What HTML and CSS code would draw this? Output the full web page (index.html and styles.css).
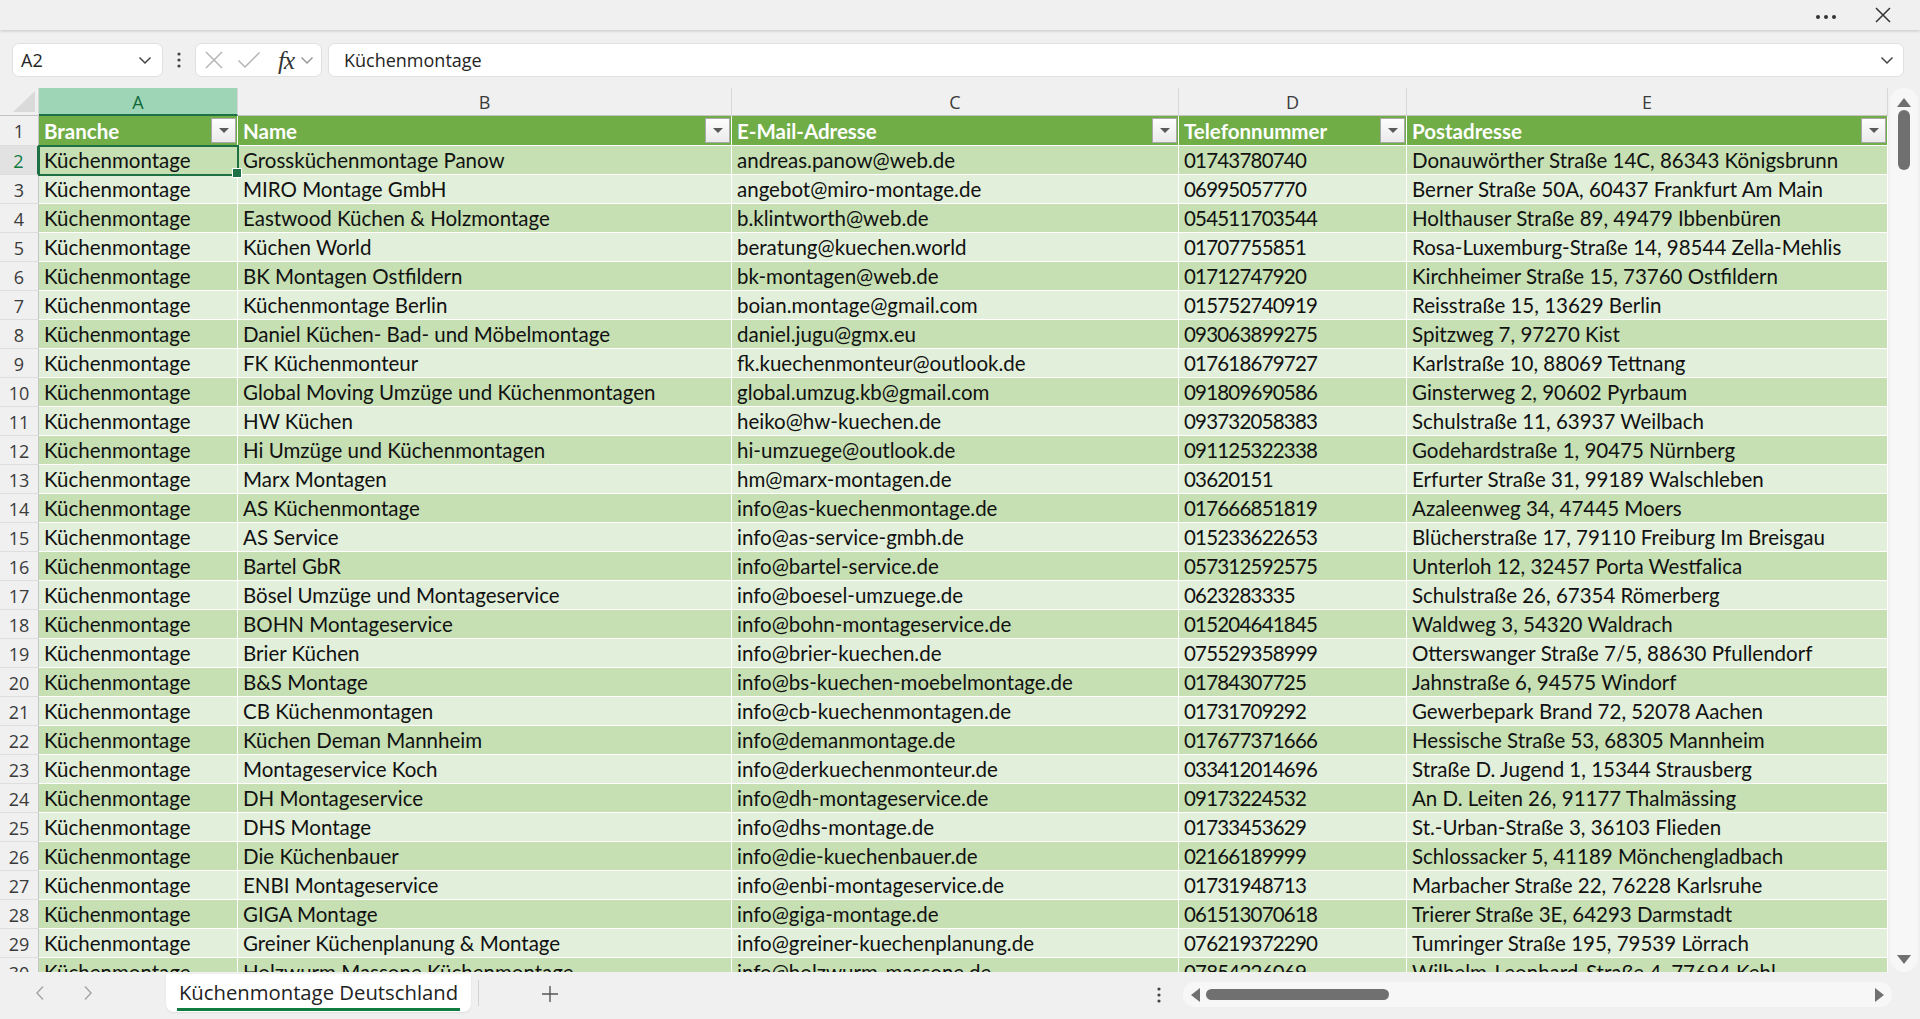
FILE: index.html
```html
<!DOCTYPE html>
<html lang="de">
<head>
  <meta charset="UTF-8" />
  <title>Küchenmontage Deutschland</title>
  <link rel="stylesheet" href="styles.css">
</head>
<body>
  <div class="app">
    <div class="topbar">
      <svg class="icon-more" width="22" height="6" viewBox="0 0 22 6"><circle cx="3" cy="3" r="2"/><circle cx="11" cy="3" r="2"/><circle cx="19" cy="3" r="2"/></svg>
      <svg class="icon-close" width="18" height="18" viewBox="0 0 18 18"><path d="M2 2 L16 16 M16 2 L2 16"/></svg>
    </div>

    <div class="formula-row">
      <div class="namebox">
        <span>A2</span>
        <svg width="14" height="9" viewBox="0 0 14 9"><path d="M1.5 1.5 L7 7 L12.5 1.5"/></svg>
      </div>
      <div class="vdots">
        <svg width="4" height="16" viewBox="0 0 4 16"><circle cx="2" cy="2" r="1.6"/><circle cx="2" cy="8" r="1.6"/><circle cx="2" cy="14" r="1.6"/></svg>
      </div>
      <div class="fxbox">
        <svg class="fx-cancel" width="20" height="20" viewBox="0 0 20 20"><path d="M2 2 L18 18 M18 2 L2 18"/></svg>
        <svg class="fx-ok" width="24" height="18" viewBox="0 0 24 18"><path d="M1.5 9.5 L8 16 L22.5 1.5"/></svg>
        <span class="fx">fx</span>
        <svg class="fx-drop" width="14" height="9" viewBox="0 0 14 9"><path d="M1.5 1.5 L7 7 L12.5 1.5"/></svg>
      </div>
      <div class="formula">
        <span>Küchenmontage</span>
        <svg width="14" height="9" viewBox="0 0 14 9"><path d="M1.5 1.5 L7 7 L12.5 1.5"/></svg>
      </div>
    </div>

    <div class="workarea">
      <div class="sheet" id="sheet">
        <div class="corner"><svg width="22" height="21" viewBox="0 0 22 21"><path d="M22 0 L22 21 L0 21 Z"/></svg></div>
        <div class="colhead active">A</div>
        <div class="colhead">B</div>
        <div class="colhead">C</div>
        <div class="colhead">D</div>
        <div class="colhead">E</div>

        <div class="rowhead">1</div>
        <div class="th">Branche<span class="filter"></span></div>
        <div class="th">Name<span class="filter"></span></div>
        <div class="th">E-Mail-Adresse<span class="filter"></span></div>
        <div class="th">Telefonnummer<span class="filter"></span></div>
        <div class="th">Postadresse<span class="filter"></span></div>
      </div>

      <div class="vscroll">
        <div class="track">
          <span class="arrow up"></span>
          <span class="thumb"></span>
          <span class="arrow down"></span>
        </div>
      </div>
    </div>

    <div class="bottombar">
      <svg class="nav" width="10" height="16" viewBox="0 0 10 16"><path d="M8 1.5 L2 8 L8 14.5"/></svg>
      <svg class="nav" width="10" height="16" viewBox="0 0 10 16"><path d="M2 1.5 L8 8 L2 14.5"/></svg>
      <div class="tab"><span>Küchenmontage Deutschland</span></div>
      <span class="tab-sep"></span>
      <svg class="plus" width="18" height="18" viewBox="0 0 18 18"><path d="M9 1 L9 17 M1 9 L17 9"/></svg>
      <div class="bottom-dots">
        <svg width="4" height="16" viewBox="0 0 4 16"><circle cx="2" cy="2" r="1.6"/><circle cx="2" cy="8" r="1.6"/><circle cx="2" cy="14" r="1.6"/></svg>
      </div>
      <div class="hscroll">
        <span class="arrow left"></span>
        <span class="thumb"></span>
        <span class="arrow right"></span>
      </div>
    </div>
  </div>

  <script>
    const rows = [
      ['Grossküchenmontage Panow', 'andreas.panow@web.de', '01743780740', 'Donauwörther Straße 14C, 86343 Königsbrunn'],
      ['MIRO Montage GmbH', 'angebot@miro-montage.de', '06995057770', 'Berner Straße 50A, 60437 Frankfurt Am Main'],
      ['Eastwood Küchen & Holzmontage', 'b.klintworth@web.de', '054511703544', 'Holthauser Straße 89, 49479 Ibbenbüren'],
      ['Küchen World', 'beratung@kuechen.world', '01707755851', 'Rosa-Luxemburg-Straße 14, 98544 Zella-Mehlis'],
      ['BK Montagen Ostfildern', 'bk-montagen@web.de', '01712747920', 'Kirchheimer Straße 15, 73760 Ostfildern'],
      ['Küchenmontage Berlin', 'boian.montage@gmail.com', '015752740919', 'Reisstraße 15, 13629 Berlin'],
      ['Daniel Küchen- Bad- und Möbelmontage', 'daniel.jugu@gmx.eu', '093063899275', 'Spitzweg 7, 97270 Kist'],
      ['FK Küchenmonteur', 'fk.kuechenmonteur@outlook.de', '017618679727', 'Karlstraße 10, 88069 Tettnang'],
      ['Global Moving Umzüge und Küchenmontagen', 'global.umzug.kb@gmail.com', '091809690586', 'Ginsterweg 2, 90602 Pyrbaum'],
      ['HW Küchen', 'heiko@hw-kuechen.de', '093732058383', 'Schulstraße 11, 63937 Weilbach'],
      ['Hi Umzüge und Küchenmontagen', 'hi-umzuege@outlook.de', '091125322338', 'Godehardstraße 1, 90475 Nürnberg'],
      ['Marx Montagen', 'hm@marx-montagen.de', '03620151', 'Erfurter Straße 31, 99189 Walschleben'],
      ['AS Küchenmontage', 'info@as-kuechenmontage.de', '017666851819', 'Azaleenweg 34, 47445 Moers'],
      ['AS Service', 'info@as-service-gmbh.de', '015233622653', 'Blücherstraße 17, 79110 Freiburg Im Breisgau'],
      ['Bartel GbR', 'info@bartel-service.de', '057312592575', 'Unterloh 12, 32457 Porta Westfalica'],
      ['Bösel Umzüge und Montageservice', 'info@boesel-umzuege.de', '0623283335', 'Schulstraße 26, 67354 Römerberg'],
      ['BOHN Montageservice', 'info@bohn-montageservice.de', '015204641845', 'Waldweg 3, 54320 Waldrach'],
      ['Brier Küchen', 'info@brier-kuechen.de', '075529358999', 'Otterswanger Straße 7/5, 88630 Pfullendorf'],
      ['B&S Montage', 'info@bs-kuechen-moebelmontage.de', '01784307725', 'Jahnstraße 6, 94575 Windorf'],
      ['CB Küchenmontagen', 'info@cb-kuechenmontagen.de', '01731709292', 'Gewerbepark Brand 72, 52078 Aachen'],
      ['Küchen Deman Mannheim', 'info@demanmontage.de', '017677371666', 'Hessische Straße 53, 68305 Mannheim'],
      ['Montageservice Koch', 'info@derkuechenmonteur.de', '033412014696', 'Straße D. Jugend 1, 15344 Strausberg'],
      ['DH Montageservice', 'info@dh-montageservice.de', '09173224532', 'An D. Leiten 26, 91177 Thalmässing'],
      ['DHS Montage', 'info@dhs-montage.de', '01733453629', 'St.-Urban-Straße 3, 36103 Flieden'],
      ['Die Küchenbauer', 'info@die-kuechenbauer.de', '02166189999', 'Schlossacker 5, 41189 Mönchengladbach'],
      ['ENBI Montageservice', 'info@enbi-montageservice.de', '01731948713', 'Marbacher Straße 22, 76228 Karlsruhe'],
      ['GIGA Montage', 'info@giga-montage.de', '061513070618', 'Trierer Straße 3E, 64293 Darmstadt'],
      ['Greiner Küchenplanung & Montage', 'info@greiner-kuechenplanung.de', '076219372290', 'Tumringer Straße 195, 79539 Lörrach'],
      ['Holzwurm Massone Küchenmontage', 'info@holzwurm-massone.de', '07854226069', 'Wilhelm-Leonhard-Straße 4, 77694 Kehl']
    ];

    const sheet = document.getElementById("sheet");

    function addCell(className, text) {
      const div = document.createElement("div");
      div.className = className;
      div.textContent = text;
      sheet.appendChild(div);
      return div;
    }

    rows.forEach((row, i) => {
      const n = i + 2;
      const stripe = n % 2 === 0 ? "td dark" : "td light";
      addCell(n === 2 ? "rowhead active" : "rowhead", n);
      const first = addCell(stripe, "Küchenmontage");
      if (n === 2) first.classList.add("selected");
      row.forEach((value, k) => addCell(k === 2 ? stripe + " num" : stripe, value));
    });
  </script>
</body>
</html>
```

FILE: styles.css
```css
* {
  box-sizing: border-box;
}

body {
  margin: 0;
  background: #f0f0f0;
  font-family: "Open Sans", "Noto Sans", sans-serif;
  color: #242424;
  overflow: hidden;
}

.app {
  height: 1019px;
  display: flex;
  flex-direction: column;
}

/* top strip */
.topbar {
  height: 30px;
  flex: none;
  display: flex;
  align-items: center;
  justify-content: flex-end;
  gap: 37px;
  padding-right: 28px;
  background: #f0f0f0;
  box-shadow: 0 1px 3px rgba(0,0,0,0.18);
  position: relative;
  z-index: 2;
}

.icon-more {
  fill: #333;
  margin-top: 4px;
}

.icon-close {
  stroke: #333;
  stroke-width: 1.5;
  fill: none;
}

/* formula bar */
.formula-row {
  height: 58px;
  flex: none;
  display: flex;
  align-items: flex-start;
  padding: 13px 16px 0 12px;
}

.namebox,
.fxbox,
.formula {
  height: 34px;
  background: #fff;
  border: 1px solid #e0e0e0;
  border-radius: 7px;
  display: flex;
  align-items: center;
}

.namebox {
  width: 151px;
  justify-content: space-between;
  padding: 0 10px 0 8px;
  font-size: 18px;
}

.namebox svg,
.formula svg,
.fx-drop {
  stroke: #444;
  stroke-width: 1.5;
  fill: none;
}

.vdots {
  width: 32px;
  height: 34px;
  display: flex;
  align-items: center;
  justify-content: center;
  fill: #444;
}

.fxbox {
  width: 127px;
  padding-left: 8px;
}

.fx-cancel,
.fx-ok {
  stroke: #b5b5b5;
  stroke-width: 1.5;
  fill: none;
}

.fx-ok {
  margin-left: 13px;
}

.fx {
  font-family: "Liberation Serif", serif;
  font-style: italic;
  font-size: 25px;
  color: #333;
  margin-left: 17px;
  line-height: 1;
  letter-spacing: -1px;
}

.fx-drop {
  stroke: #999;
  margin-left: 6px;
}

.formula {
  flex: 1;
  margin-left: 6px;
  justify-content: space-between;
  padding: 0 9px 0 15px;
  font-size: 18px;
}

/* sheet */
.workarea {
  height: 884px;
  flex: none;
  display: flex;
}

.sheet {
  width: 1888px;
  flex: none;
  display: grid;
  grid-template-columns: 39px 199px 494px 447px 228px 481px;
  grid-template-rows: 28px 30px;
  grid-auto-rows: 29px;
  overflow: hidden;
  align-content: start;
}

.corner {
  background: #f0f0f0;
  border-bottom: 1px solid #c4c4c4;
  border-right: 1px solid #d8d8d8;
  display: flex;
  align-items: flex-end;
  justify-content: flex-end;
  padding: 0 3px 3px 0;
  fill: #dadada;
}

.colhead {
  background: #f0f0f0;
  border-right: 1px solid #d8d8d8;
  border-bottom: 1px solid #c4c4c4;
  text-align: center;
  font-size: 18px;
  line-height: 28px;
  color: #3b3b3b;
}

.colhead.active {
  background: #9fd5b7;
  color: #0f6a38;
  border-bottom: 2px solid #1e7145;
}

.rowhead {
  background: #f0f0f0;
  border-right: 1px solid #c4c4c4;
  border-bottom: 1px solid #dedede;
  text-align: center;
  font-size: 18px;
  line-height: 30px;
  color: #3b3b3b;
}

.rowhead.active {
  background: #e2e2e2;
  color: #107c41;
  border-right: 2px solid #1e7145;
}

.th,
.td {
  font-family: Lato, "Open Sans", sans-serif;
  font-size: 20.5px;
  white-space: nowrap;
  overflow: hidden;
  padding-left: 5px;
  border-right: 1px solid #fff;
  border-bottom: 1px solid #fff;
}

.th {
  background: #70ad47;
  color: #fff;
  font-weight: bold;
  line-height: 30px;
  display: flex;
  align-items: center;
  justify-content: space-between;
  padding-right: 1px;
}

.filter {
  width: 25px;
  height: 25px;
  flex: none;
  background: linear-gradient(#fdfdfd, #eaeaea);
  border: 1px solid #a9a9a9;
  display: flex;
  align-items: center;
  justify-content: center;
}

.filter::after {
  content: "";
  border-left: 5px solid transparent;
  border-right: 5px solid transparent;
  border-top: 5px solid #5a5a5a;
}

.td {
  line-height: 28px;
  color: #111;
}

.td.num {
  letter-spacing: -0.8px;
}

.td.dark {
  background: #c6e0b4;
}

.td.light {
  background: #e2efda;
}

.td.selected {
  position: relative;
  overflow: visible;
  outline: 2px solid #1e7145;
  outline-offset: -1px;
  z-index: 1;
}

.td.selected::after {
  content: "";
  position: absolute;
  right: -5px;
  bottom: -4px;
  width: 8px;
  height: 8px;
  background: #1e7145;
  border: 1px solid #fff;
}

/* vertical scrollbar */
.vscroll {
  flex: 1;
  padding-left: 2px;
}

.vscroll .track {
  width: 28px;
  height: 100%;
  background: #f7f7f7;
  border-radius: 14px;
  display: flex;
  flex-direction: column;
  align-items: center;
  padding: 10px 0 8px;
}

.thumb {
  background: #707070;
  border-radius: 6px;
}

.vscroll .thumb {
  width: 12px;
  height: 60px;
  margin-top: 3px;
}

.vscroll .arrow.down {
  margin-top: auto;
}

.arrow.up {
  border-left: 7px solid transparent;
  border-right: 7px solid transparent;
  border-bottom: 9px solid #707070;
}

.arrow.down {
  border-left: 7px solid transparent;
  border-right: 7px solid transparent;
  border-top: 9px solid #707070;
}

.arrow.left {
  border-top: 7px solid transparent;
  border-bottom: 7px solid transparent;
  border-right: 9px solid #707070;
}

.arrow.right {
  border-top: 7px solid transparent;
  border-bottom: 7px solid transparent;
  border-left: 9px solid #707070;
}

/* sheet tabs and horizontal scrollbar */
.bottombar {
  flex: 1;
  display: flex;
  align-items: flex-start;
  padding-left: 35px;
}

.nav {
  stroke: #a6a6a6;
  stroke-width: 1.5;
  fill: none;
  margin-top: 13px;
}

.nav + .nav {
  margin-left: 38px;
}

.tab {
  margin-left: 73px;
  margin-top: 2px;
  width: 305px;
  height: 38px;
  background: #fff;
  border-radius: 0 0 8px 8px;
  box-shadow: 0 1px 2px rgba(0,0,0,0.08);
  display: flex;
  justify-content: center;
  padding-top: 5px;
}

.tab span {
  font-size: 20.3px;
  line-height: 26px;
  height: 32px;
  color: #222;
  border-bottom: 3px solid #107c41;
  padding: 0 2px;
}

.tab-sep {
  width: 1px;
  height: 26px;
  margin: 8px 0 0 7px;
  background: #d2d2d2;
}

.plus {
  stroke: #555;
  stroke-width: 1.4;
  fill: none;
  margin: 13px 0 0 62px;
}

.bottom-dots {
  margin: 14px 0 0 598px;
  fill: #444;
}

.hscroll {
  margin: 10px 0 0 22px;
  width: 709px;
  height: 25px;
  background: #f7f7f7;
  border-radius: 12px;
  display: flex;
  align-items: center;
  padding: 0 8px;
}

.hscroll .thumb {
  width: 183px;
  height: 11px;
  margin-left: 6px;
}

.hscroll .arrow.right {
  margin-left: auto;
}
```
